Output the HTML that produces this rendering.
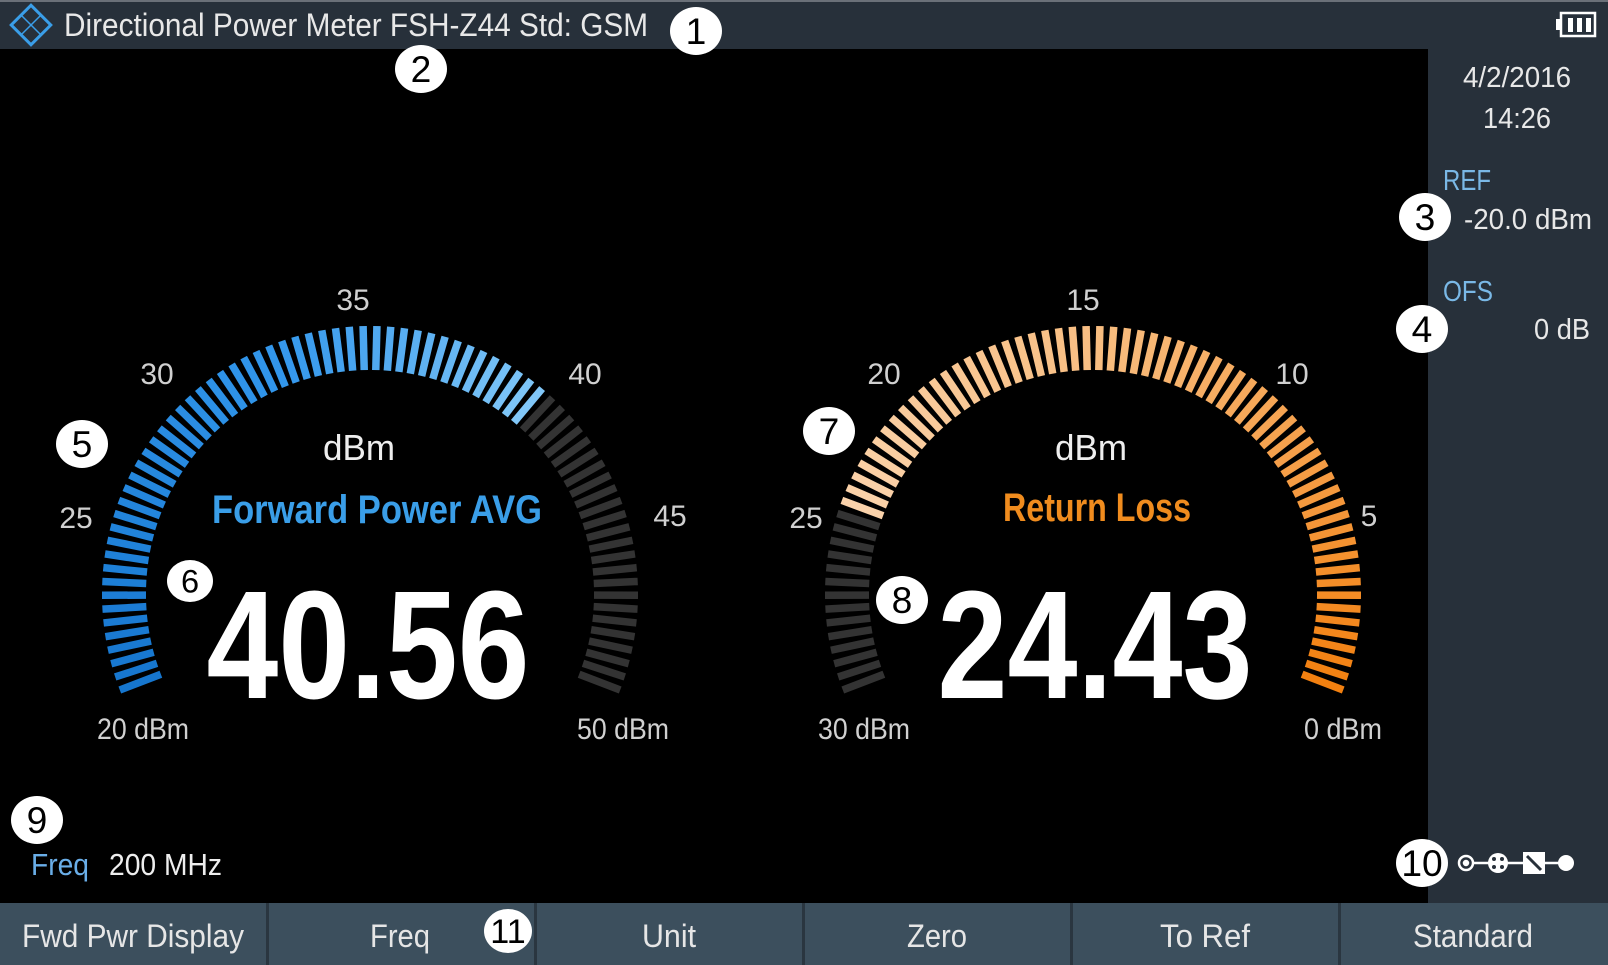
<!DOCTYPE html>
<html><head><meta charset="utf-8"><style>
html,body{margin:0;padding:0;background:#000;}
svg{display:block;font-family:"Liberation Sans Narrow","Liberation Sans",sans-serif;}
</style></head><body>
<svg id="s" width="1608" height="965" viewBox="0 0 1608 965" xmlns="http://www.w3.org/2000/svg">
<rect width="1608" height="965" fill="#000"/>
<rect x="0" y="0" width="1608" height="49" fill="#27303a"/>
<rect x="0" y="0" width="1608" height="2" fill="#6a7078"/>
<rect x="1428" y="49" width="180" height="855" fill="#27303a"/>
<rect x="0" y="903" width="1608" height="62" fill="#3c4f5d"/>
<g fill="#2a3640">
<rect x="266" y="903" width="3" height="62"/><rect x="534" y="903" width="3" height="62"/>
<rect x="802" y="903" width="3" height="62"/><rect x="1070" y="903" width="3" height="62"/>
<rect x="1338" y="903" width="3" height="62"/></g>
<g font-size="32" fill="#e6e6e6" text-anchor="middle" font-family="Liberation Sans Narrow, Liberation Sans, sans-serif">
<text x="133" y="947" textLength="222" lengthAdjust="spacingAndGlyphs">Fwd Pwr Display</text>
<text x="400" y="947" textLength="60" lengthAdjust="spacingAndGlyphs">Freq</text>
<text x="669" y="947" textLength="54" lengthAdjust="spacingAndGlyphs">Unit</text>
<text x="937" y="947" textLength="60" lengthAdjust="spacingAndGlyphs">Zero</text>
<text x="1205" y="947" textLength="90" lengthAdjust="spacingAndGlyphs">To Ref</text>
<text x="1473" y="947" textLength="120" lengthAdjust="spacingAndGlyphs">Standard</text></g>
<!-- logo -->
<g transform="translate(31,25) rotate(45)" fill="none" stroke="#3a9ee8" stroke-width="3">
<rect x="-14" y="-14" width="28" height="28"/><line x1="0" y1="-14" x2="0" y2="14" stroke-width="1.5"/><line x1="-14" y1="0" x2="14" y2="0" stroke-width="1.5"/></g>
<text x="64" y="36" font-size="32" fill="#e8e8e8" textLength="584" lengthAdjust="spacingAndGlyphs">Directional Power Meter FSH-Z44 Std: GSM</text>
<!-- battery -->
<g fill="none" stroke="#fff" stroke-width="2.5"><rect x="1561" y="13" width="34" height="23"/></g>
<rect x="1556" y="19" width="5" height="11" fill="#fff"/>
<g fill="#fff"><rect x="1568" y="18" width="5" height="14"/><rect x="1577" y="18" width="5" height="14"/><rect x="1586" y="18" width="5" height="14"/></g>
<!-- right panel -->
<g font-family="Liberation Sans Narrow, Liberation Sans, sans-serif" font-size="29">
<text x="1517" y="87" fill="#e8e8e8" text-anchor="middle" textLength="108" lengthAdjust="spacingAndGlyphs">4/2/2016</text>
<text x="1517" y="128" fill="#e8e8e8" text-anchor="middle" textLength="68" lengthAdjust="spacingAndGlyphs">14:26</text>
<text x="1443" y="190" fill="#7ab8e6" textLength="48" lengthAdjust="spacingAndGlyphs">REF</text>
<text x="1592" y="229" fill="#e8e8e8" text-anchor="end" textLength="128" lengthAdjust="spacingAndGlyphs">-20.0 dBm</text>
<text x="1443" y="301" fill="#7ab8e6" textLength="50" lengthAdjust="spacingAndGlyphs">OFS</text>
<text x="1590" y="339" fill="#e8e8e8" text-anchor="end" textLength="56" lengthAdjust="spacingAndGlyphs">0 dB</text>
<text x="31" y="875" fill="#6aaee8" font-size="31" textLength="58" lengthAdjust="spacingAndGlyphs">Freq</text>
<text x="109" y="875" fill="#eee" font-size="31" textLength="113" lengthAdjust="spacingAndGlyphs">200 MHz</text></g>
<!-- connection icon -->
<g stroke="#fff" stroke-width="2.5" fill="none">
<line x1="1468" y1="863" x2="1566" y2="863"/>
<circle cx="1466" cy="863" r="7" fill="#27303a"/><circle cx="1466" cy="863" r="2" fill="#fff"/>
<circle cx="1498" cy="863" r="10" fill="#fff" stroke="none"/>
<rect x="1523" y="852" width="22" height="22" fill="#fff" stroke="none"/>
<line x1="1527" y1="856" x2="1541" y2="870" stroke="#27303a" stroke-width="3"/>
<circle cx="1566" cy="863" r="8" fill="#fff" stroke="none"/></g>
<g fill="#27303a"><circle cx="1494" cy="859" r="2"/><circle cx="1502" cy="859" r="2"/><circle cx="1494" cy="867" r="2"/><circle cx="1502" cy="867" r="2"/></g>
<g id="g1"></g><g id="g2"></g>
<!-- gauge labels -->
<g font-size="30" fill="#d0d0d0" text-anchor="middle" font-family="Liberation Sans Narrow, Liberation Sans, sans-serif">
<text x="353" y="310">35</text><text x="157" y="384">30</text><text x="585" y="384">40</text>
<text x="76" y="528">25</text><text x="670" y="526">45</text>
<text x="143" y="739" textLength="92" lengthAdjust="spacingAndGlyphs">20 dBm</text>
<text x="623" y="739" textLength="92" lengthAdjust="spacingAndGlyphs">50 dBm</text>
<text x="1083" y="310">15</text><text x="884" y="384">20</text><text x="1292" y="384">10</text>
<text x="806" y="528">25</text><text x="1369" y="526">5</text>
<text x="864" y="739" textLength="92" lengthAdjust="spacingAndGlyphs">30 dBm</text>
<text x="1343" y="739" textLength="78" lengthAdjust="spacingAndGlyphs">0 dBm</text>
<text x="359" y="460" font-size="36" fill="#eee" textLength="72" lengthAdjust="spacingAndGlyphs">dBm</text>
<text x="1091" y="460" font-size="36" fill="#eee" textLength="72" lengthAdjust="spacingAndGlyphs">dBm</text></g>
<text x="377" y="523" font-size="40" font-weight="bold" fill="#3a9ee8" text-anchor="middle" textLength="330" lengthAdjust="spacingAndGlyphs">Forward Power AVG</text>
<text x="1097" y="521" font-size="40" font-weight="bold" fill="#f08c1e" text-anchor="middle" textLength="188" lengthAdjust="spacingAndGlyphs">Return Loss</text>
<text x="368" y="698" font-size="154" font-weight="bold" fill="#fff" text-anchor="middle" textLength="323" lengthAdjust="spacingAndGlyphs">40.56</text>
<text x="1095" y="698" font-size="154" font-weight="bold" fill="#fff" text-anchor="middle" textLength="315" lengthAdjust="spacingAndGlyphs">24.43</text>
<!-- callouts -->
<g id="co" font-family="Liberation Sans, sans-serif" text-anchor="middle"></g>
</svg>
<script>
var NS="http://www.w3.org/2000/svg";
function lerp(a,b,t){return a.map(function(v,i){return Math.round(v+(b[i]-v)*t);});}
function col(stops,t){for(var i=0;i<stops.length-1;i++){if(t<=stops[i+1][0]){var u=(t-stops[i][0])/(stops[i+1][0]-stops[i][0]);var c=lerp(stops[i][1],stops[i+1][1],u);return "rgb("+c+")";}}return "rgb("+stops[stops.length-1][1]+")";}
function gauge(id,cx,cy,f){
 var g=document.getElementById(id),N=76,ro=268,ri=224,a0=-111,a1=111;
 for(var i=0;i<N;i++){var t=i/(N-1),a=(a0+(a1-a0)*t)*Math.PI/180;
  var s=Math.sin(a),c=Math.cos(a);
  var l=document.createElementNS(NS,"line");
  l.setAttribute("x1",cx+ri*s);l.setAttribute("y1",cy-ri*c);
  l.setAttribute("x2",cx+ro*s);l.setAttribute("y2",cy-ro*c);
  l.setAttribute("stroke",f(t));l.setAttribute("stroke-width","7.5");g.appendChild(l);}
}
gauge("g1",370,594,function(t){if(t>0.685)return "#333";return col([[0,[22,118,206]],[0.4,[50,150,235]],[0.685,[130,200,248]]],t);});
gauge("g2",1093,594,function(t){if(t<0.186)return "#333";return col([[0.186,[250,210,170]],[0.5,[248,190,130]],[1,[242,128,16]]],t);});
var cs=[[696,31,24,"1"],[421,69,24,"2"],[1425,217,24,"3"],[1422,329,24,"4"],[82,444,24,"5"],[190,581,21,"6"],[829,431,24,"7"],[902,600,24,"8"],[37,820,24,"9"],[1422,863,24,"10"],[508,931,22,"11"]];
var co=document.getElementById("co");
cs.forEach(function(c){var e=document.createElementNS(NS,"ellipse");e.setAttribute("cx",c[0]);e.setAttribute("cy",c[1]);e.setAttribute("rx",c[2]+2);e.setAttribute("ry",c[2]);e.setAttribute("fill","#fff");co.appendChild(e);
var t=document.createElementNS(NS,"text");t.setAttribute("x",c[0]);t.setAttribute("y",c[1]+c[2]*0.55);t.setAttribute("font-size",c[2]*1.55);t.textContent=c[3];co.appendChild(t);});
</script>
</body></html>
